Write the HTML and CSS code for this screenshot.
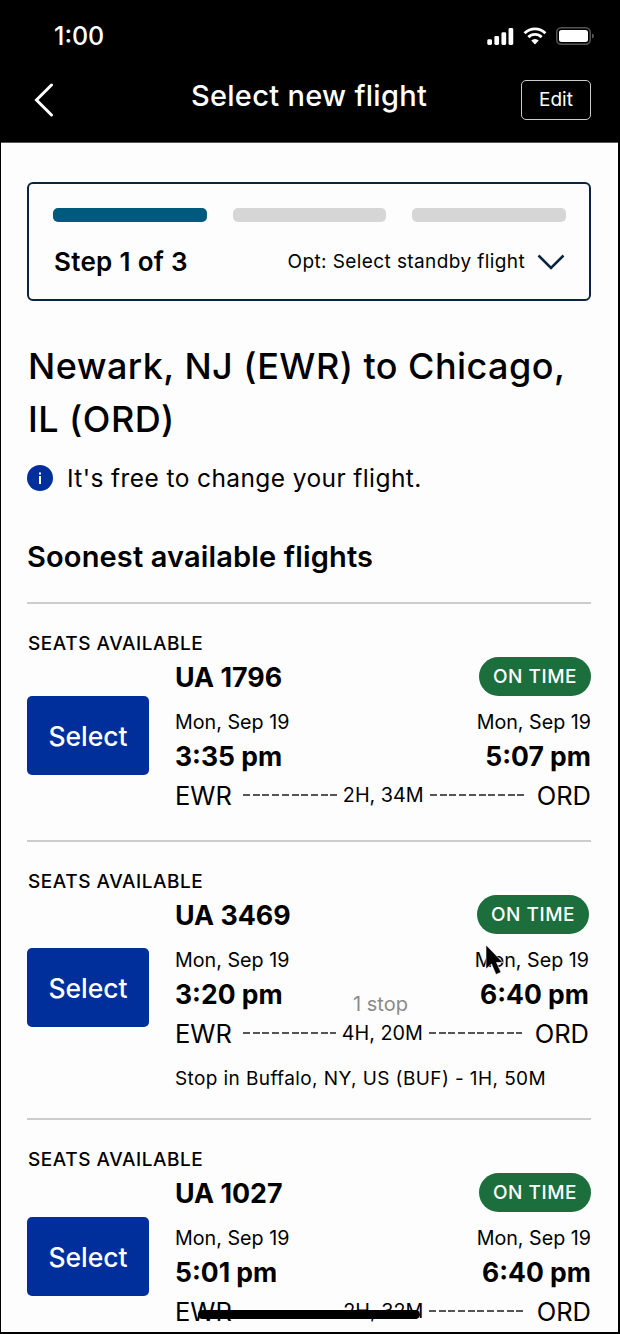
FILE: index.html
```html
<!DOCTYPE html>
<html lang="en">
<head>
    <meta charset="UTF-8">
    <meta name="viewport" content="width=device-width, initial-scale=1.0">
    <title>Select new flight</title>
    <link rel="stylesheet" href="styles.css">
</head>
<body>
    <div class="phone">
        <header class="top-bar">
            <div class="status-bar">
                <span class="status-time">1:00</span>
                <div class="status-icons">
                    <svg width="27" height="17" viewBox="0 0 28 18" fill="#fff">
                        <rect x="0" y="12" width="5" height="6" rx="1.5"/>
                        <rect x="7.5" y="8.5" width="5" height="9.5" rx="1.5"/>
                        <rect x="15" y="4.5" width="5" height="13.5" rx="1.5"/>
                        <rect x="22.5" y="0" width="5" height="18" rx="1.5"/>
                    </svg>
                    <svg width="24" height="18" viewBox="0 0 25 19" fill="none" stroke="#fff" stroke-width="3">
                        <path d="M1.5 6.5a15.5 15.5 0 0 1 22 0"/>
                        <path d="M5.5 10.7a10 10 0 0 1 14 0"/>
                        <path d="M12.5 18.5l-4-4.2a5.6 5.6 0 0 1 8 0z" fill="#fff" stroke="none"/>
                    </svg>
                    <svg width="39" height="18" viewBox="0 0 39 18">
                        <rect x="0.75" y="0.75" width="33.5" height="16.5" rx="4.5" fill="none" stroke="#555" stroke-width="1.5"/>
                        <rect x="3" y="3" width="29" height="12" rx="2.5" fill="#fff"/>
                        <path d="M36 6.5c1.3.4 2 1.3 2 2.5s-.7 2.1-2 2.5z" fill="#555"/>
                    </svg>
                </div>
            </div>
            <div class="nav-bar">
                <svg class="back-icon" width="20" height="34" viewBox="0 0 20 34" fill="none" stroke="#fff" stroke-width="3" stroke-linecap="round">
                    <path d="M17.5 2L2.5 17l15 15"/>
                </svg>
                <h1 class="nav-title">Select new flight</h1>
                <button class="edit-btn">Edit</button>
            </div>
        </header>

        <main class="content">
            <section class="progress-card">
                <div class="progress-bars">
                    <div class="bar bar-active"></div>
                    <div class="bar"></div>
                    <div class="bar"></div>
                </div>
                <div class="progress-info">
                    <span class="step-label">Step 1 of 3</span>
                    <span class="step-next">Opt: Select standby flight</span>
                    <svg width="28" height="16" viewBox="0 0 28 16" fill="none" stroke="#0c2340" stroke-width="2.5">
                        <path d="M1.5 1.5L14 14 26.5 1.5"/>
                    </svg>
                </div>
            </section>

            <h2 class="route-title">Newark, NJ (EWR) to Chicago, IL (ORD)</h2>
            <div class="info-line">
                <svg width="26" height="26" viewBox="0 0 26 26">
                    <circle cx="13" cy="13" r="13" fill="#002f9b"/>
                    <rect x="12" y="11" width="2" height="8" fill="#fff"/>
                    <rect x="12" y="7.5" width="2" height="2" fill="#fff"/>
                </svg>
                <span>It's free to change your flight.</span>
            </div>

            <h3 class="section-title">Soonest available flights</h3>

            <!-- Flight 1 -->
            <article class="flight">
                <div class="seats">SEATS AVAILABLE</div>
                <div class="flight-body">
                    <button class="select-btn">Select</button>
                    <div class="flight-info">
                        <div class="row row-top">
                            <span class="flight-no">UA 1796</span>
                            <span class="pill">ON TIME</span>
                        </div>
                        <div class="row row-date">
                            <span>Mon, Sep 19</span>
                            <span>Mon, Sep 19</span>
                        </div>
                        <div class="row row-time">
                            <span>3:35 pm</span>
                            <span>5:07 pm</span>
                        </div>
                        <div class="row row-airports">
                            <span>EWR</span>
                            <span class="dashes"></span>
                            <span class="duration">2H, 34M</span>
                            <span class="dashes"></span>
                            <span>ORD</span>
                        </div>
                    </div>
                </div>
            </article>

            <!-- Flight 2 -->
            <article class="flight flight-stop">
                <div class="seats">SEATS AVAILABLE</div>
                <div class="flight-body">
                    <button class="select-btn">Select</button>
                    <div class="flight-info">
                        <div class="row row-top">
                            <span class="flight-no">UA 3469</span>
                            <span class="pill">ON TIME</span>
                        </div>
                        <div class="row row-date">
                            <span>Mon, Sep 19</span>
                            <span>Mon, Sep 19</span>
                        </div>
                        <div class="row row-time">
                            <span>3:20 pm</span>
                            <span class="stops">1 stop</span>
                            <span>6:40 pm</span>
                        </div>
                        <div class="row row-airports">
                            <span>EWR</span>
                            <span class="dashes"></span>
                            <span class="duration">4H, 20M</span>
                            <span class="dashes"></span>
                            <span>ORD</span>
                        </div>
                        <div class="stop-detail">Stop in Buffalo, NY, US (BUF) - 1H, 50M</div>
                    </div>
                </div>
            </article>

            <!-- Flight 3 -->
            <article class="flight flight-last">
                <div class="seats">SEATS AVAILABLE</div>
                <div class="flight-body">
                    <button class="select-btn">Select</button>
                    <div class="flight-info">
                        <div class="row row-top">
                            <span class="flight-no">UA 1027</span>
                            <span class="pill">ON TIME</span>
                        </div>
                        <div class="row row-date">
                            <span>Mon, Sep 19</span>
                            <span>Mon, Sep 19</span>
                        </div>
                        <div class="row row-time">
                            <span>5:01 pm</span>
                            <span>6:40 pm</span>
                        </div>
                        <div class="row row-airports">
                            <span>EWR</span>
                            <span class="dashes"></span>
                            <span class="duration">2H, 32M</span>
                            <span class="dashes"></span>
                            <span>ORD</span>
                        </div>
                    </div>
                </div>
            </article>
        </main>

        <!-- Overlays -->
        <svg class="cursor" width="20" height="32" viewBox="0 0 20 32">
            <path d="M1 1v24l5.5-5 4.5 10.5 5-2.2-4.5-9.8H18z" fill="#000" stroke="#fff" stroke-width="0.6"/>
        </svg>
        <div class="home-indicator"></div>
    </div>
</body>
</html>
```
FILE: styles.css
```css
* {
    box-sizing: border-box;
}

body {
    margin: 0;
    padding: 0;
    background-color: #000;
    font-family: Inter, "Liberation Sans", sans-serif;
    color: #000;
}

.phone {
    position: relative;
    width: 620px;
    height: 1334px;
    overflow: hidden;
    background-color: #fdfdfd;
    border-left: 1px solid #000;
    border-right: 2px solid #000;
    border-bottom: 2px solid #000;
}

/* Header */
.top-bar {
    height: 143px;
    background-color: #000;
    color: #fff;
    border-bottom: 1px solid #555;
}

.status-bar {
    height: 71px;
    display: flex;
    justify-content: space-between;
    align-items: center;
    padding: 1px 23px 0 53px;
}

.status-time {
    font-size: 25px;
    font-weight: 500;
}

.status-icons {
    display: flex;
    align-items: center;
    gap: 9px;
}

.nav-bar {
    display: grid;
    grid-template-columns: 1fr auto 1fr;
    align-items: center;
    padding: 0 27px 0 33px;
    height: 50px;
}

.back-icon {
    margin-top: 7px;
}

.nav-title {
    margin: -2px 0 0 -7px;
    font-size: 29px;
    font-weight: 500;
    letter-spacing: 0.3px;
}

.edit-btn {
    justify-self: end;
    width: 70px;
    height: 40px;
    margin-top: 7px;
    background: none;
    color: #fff;
    border: 1.5px solid #ccc;
    border-radius: 5px;
    font-family: inherit;
    font-size: 19px;
}

/* Main */
.content {
    padding: 39px 27px 0 26px;
}

.progress-card {
    height: 119px;
    border: 2px solid #0c2340;
    border-radius: 6px;
    padding: 24px 23px 0 24px;
}

.progress-bars {
    display: flex;
    gap: 26px;
}

.bar {
    flex: 1;
    height: 14px;
    border-radius: 5px;
    background-color: #d6d6d6;
}

.bar-active {
    background-color: #005a7d;
}

.progress-info {
    display: flex;
    align-items: center;
    margin: 24px 1px 0 1px;
}

.step-label {
    font-size: 26px;
    font-weight: 600;
    letter-spacing: 0.3px;
    margin-right: auto;
}

.step-next {
    font-size: 19px;
    letter-spacing: 0.4px;
    margin-right: 12px;
}

.route-title {
    margin: 39px 0 0 1px;
    font-size: 36px;
    font-weight: 500;
    letter-spacing: 0.45px;
    line-height: 53px;
}

.info-line {
    display: flex;
    align-items: center;
    gap: 14px;
    margin-top: 17px;
    font-size: 24.5px;
    letter-spacing: 0.4px;
}

.section-title {
    margin: 47px 0 0 0;
    font-size: 29px;
    font-weight: 600;
    letter-spacing: 0.15px;
    line-height: 33px;
}

/* Flights */
.flight {
    height: 238px;
    border-top: 2px solid #ccc;
    margin-top: 29px;
    padding-top: 29px;
}

.flight + .flight {
    margin-top: 0;
}

.flight-stop {
    height: 278px;
}

.seats {
    margin-left: 1px;
    font-size: 19px;
    font-weight: 500;
    letter-spacing: 0.55px;
    line-height: 22px;
}

.flight-body {
    display: flex;
    align-items: flex-start;
    gap: 26px;
    margin-top: 2px;
}

.select-btn {
    flex: none;
    width: 122px;
    height: 79px;
    margin-top: 39px;
    background-color: #002f9b;
    color: #fff;
    border: none;
    border-radius: 5px;
    font-family: inherit;
    font-size: 26.5px;
    font-weight: 500;
}

.flight-stop .select-btn {
    margin-top: 53px;
}

.flight-last .select-btn {
    margin-top: 44px;
}

.flight-info {
    flex: 1;
}

.flight-stop .flight-info {
    margin-right: 2px;
}

.row {
    display: flex;
    justify-content: space-between;
    align-items: center;
}

.row-top {
    height: 39px;
}

.flight-no {
    font-size: 26.8px;
    font-weight: 700;
}

.pill {
    width: 112px;
    height: 39px;
    border-radius: 20px;
    background-color: #1c6e3d;
    color: #fff;
    font-size: 19px;
    font-weight: 500;
    letter-spacing: 0.5px;
    line-height: 39px;
    text-align: center;
}

.row-date {
    margin-top: 12px;
    height: 28px;
    font-size: 19.7px;
}

.row-time {
    position: relative;
    margin-top: 3px;
    height: 34px;
    font-size: 26.5px;
    font-weight: 700;
}

.stops {
    position: absolute;
    left: 178px;
    top: 15px;
    font-size: 20px;
    font-weight: 400;
    color: #8a8a8a;
}

.row-airports {
    margin-top: 5px;
    height: 34px;
    font-size: 25.5px;
    gap: 6px;
}

.dashes {
    flex: 1;
    height: 2px;
    background-image: repeating-linear-gradient(to right, #555 0, #555 7px, transparent 7px, transparent 9.7px);
}

.row-airports > :first-child {
    margin-right: 5px;
}

.row-airports > :last-child {
    margin-left: 7px;
}

.duration {
    font-size: 19.8px;
}

.stop-detail {
    margin-top: 17px;
    font-size: 19px;
    letter-spacing: 0.4px;
    line-height: 24px;
}

/* Overlays */
.cursor {
    position: absolute;
    left: 484px;
    top: 944px;
}

.home-indicator {
    position: absolute;
    left: 197px;
    top: 1310px;
    width: 222px;
    height: 9px;
    border-radius: 5px;
    background-color: #000;
}
```
